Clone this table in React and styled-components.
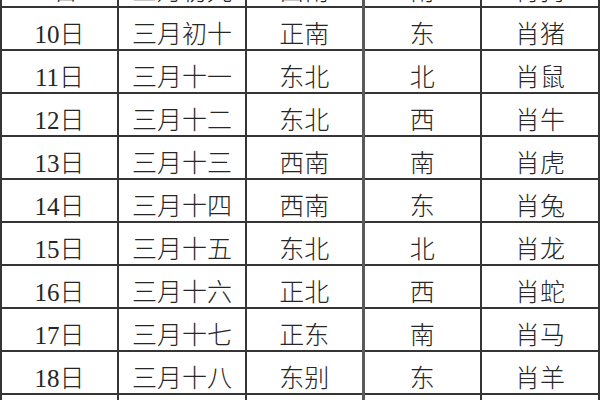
import React from 'react'
import styled, { createGlobalStyle } from 'styled-components'

const GlobalStyle = createGlobalStyle`
  * {
    box-sizing: border-box;
  }
  html, body {
    margin: 0;
    padding: 0;
    background: #ffffff;
    overflow: hidden;
  }
`
const Page = styled.div`
  width: 600px;
  height: 400px;
  overflow: hidden;
  background: #ffffff;
`
const Table = styled.table`
  border-collapse: collapse;
  table-layout: fixed;
  width: 598px;
  margin-top: -37px;
  font-family: 'Liberation Serif', 'Noto Sans CJK SC', serif;
  font-size: 25px;
  font-weight: 300;
  color: #262626;
`
const Row = styled.tr`
  height: 43px;
`
const Cell = styled.td`
  border: 2px solid #353535;
  border-left-width: ${(p) => (p.$thick ? '3px' : '2px')};
  border-left-color: ${(p) => (p.$thick ? '#5a5a5a' : '#353535')};
  text-align: center;
  vertical-align: middle;
  padding: 11px 0 0;
  line-height: 1;
  white-space: nowrap;
`

const widths = [117, 128, 117, 118, 118]

const rows = [
  ['9日', '三月初九', '西南', '南', '肖狗'],
  ['10日', '三月初十', '正南', '东', '肖猪'],
  ['11日', '三月十一', '东北', '北', '肖鼠'],
  ['12日', '三月十二', '东北', '西', '肖牛'],
  ['13日', '三月十三', '西南', '南', '肖虎'],
  ['14日', '三月十四', '西南', '东', '肖兔'],
  ['15日', '三月十五', '东北', '北', '肖龙'],
  ['16日', '三月十六', '正北', '西', '肖蛇'],
  ['17日', '三月十七', '正东', '南', '肖马'],
  ['18日', '三月十八', '东别', '东', '肖羊'],
  ['19日', '三月十九', '西北', '北', '肖猴'],
]

export default function App() {
  return (
    <>
      <GlobalStyle />
      <Page>
        <Table>
          <colgroup>
            {widths.map((w, i) => (
              <col key={i} style={{ width: w }} />
            ))}
          </colgroup>
          <tbody>
            {rows.map((r) => (
              <Row key={r[0]}>
                {r.map((c, i) => (
                  <Cell key={i} $thick={i === 3}>
                    {c}
                  </Cell>
                ))}
              </Row>
            ))}
          </tbody>
        </Table>
      </Page>
    </>
  )
}
